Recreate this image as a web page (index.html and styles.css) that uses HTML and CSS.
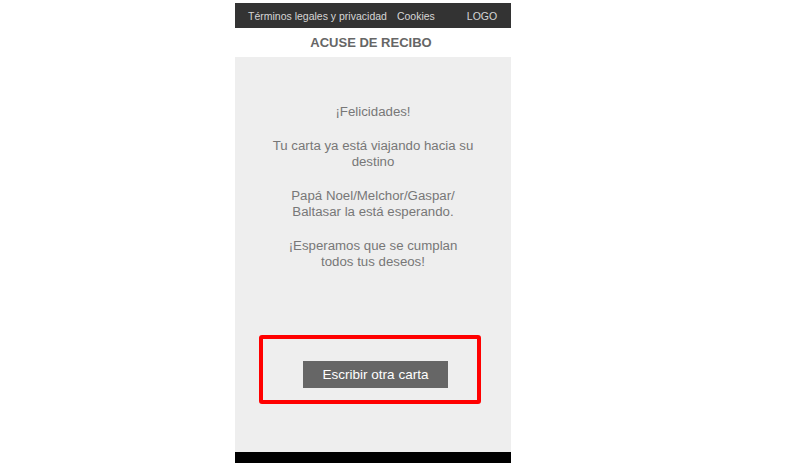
FILE: index.html
```html
<!DOCTYPE html>
<html lang="es">
<head>
<meta charset="utf-8">
<link rel="stylesheet" href="styles.css">
</head>
<body>
<div class="phone">
  <header class="topbar">
    <span class="link first">Términos legales y privacidad</span>
    <span class="link">Cookies</span>
    <span class="logo">LOGO</span>
  </header>
  <h1 class="title">ACUSE DE RECIBO</h1>
  <main class="content">
    <div class="message">
      <p>¡Felicidades!</p>
      <p>Tu carta ya está viajando hacia su<br>destino</p>
      <p>Papá Noel/Melchor/Gaspar/<br>Baltasar la está esperando.</p>
      <p>¡Esperamos que se cumplan<br>todos tus deseos!</p>
    </div>
    <div class="action">
      <button class="btn">Escribir otra carta</button>
      <div class="highlight"></div>
    </div>
  </main>
  <footer class="bottombar"></footer>
</div>
</body>
</html>
```
FILE: styles.css
```css
html, body {
  margin: 0;
  padding: 0;
  background: #ffffff;
  font-family: "Liberation Sans", Arial, sans-serif;
}
.phone {
  width: 276px;
  margin-left: 235px;
  padding-top: 3px;
  display: flex;
  flex-direction: column;
}
.topbar {
  height: 25px;
  background: #333333;
  display: flex;
  align-items: center;
  padding-left: 13px;
  font-size: 10.5px;
  color: #d6d6d6;
  white-space: nowrap;
}
.topbar .link {
  margin-right: 15px;
  flex-shrink: 0;
}
.topbar .link.first {
  margin-right: 10px;
}
.topbar .logo {
  margin-left: 17px;
  flex-shrink: 0;
}
.title {
  margin: 0;
  height: 29px;
  line-height: 30px;
  text-align: center;
  font-size: 13px;
  font-weight: bold;
  color: #666666;
  padding-right: 4px;
}
.content {
  height: 395px;
  background: #eeeeee;
  display: flex;
  flex-direction: column;
  align-items: center;
}
.message {
  padding-top: 47px;
  text-align: center;
  font-size: 13.25px;
  line-height: 16px;
  color: #777777;
}
.message p {
  margin: 0 0 18px 0;
}
.action {
  position: relative;
  margin-top: 73px;
  padding-left: 5px;
}
.btn {
  width: 145px;
  height: 27px;
  border: 0;
  background: #666666;
  color: #ffffff;
  font-family: "Liberation Sans", Arial, sans-serif;
  font-size: 13.5px;
  padding: 0;
}
.highlight {
  position: absolute;
  left: -39px;
  top: -26px;
  width: 214px;
  height: 61px;
  border: 4px solid #ff0000;
  border-radius: 3px;
}
.bottombar {
  height: 20px;
  background: #000000;
}
```
